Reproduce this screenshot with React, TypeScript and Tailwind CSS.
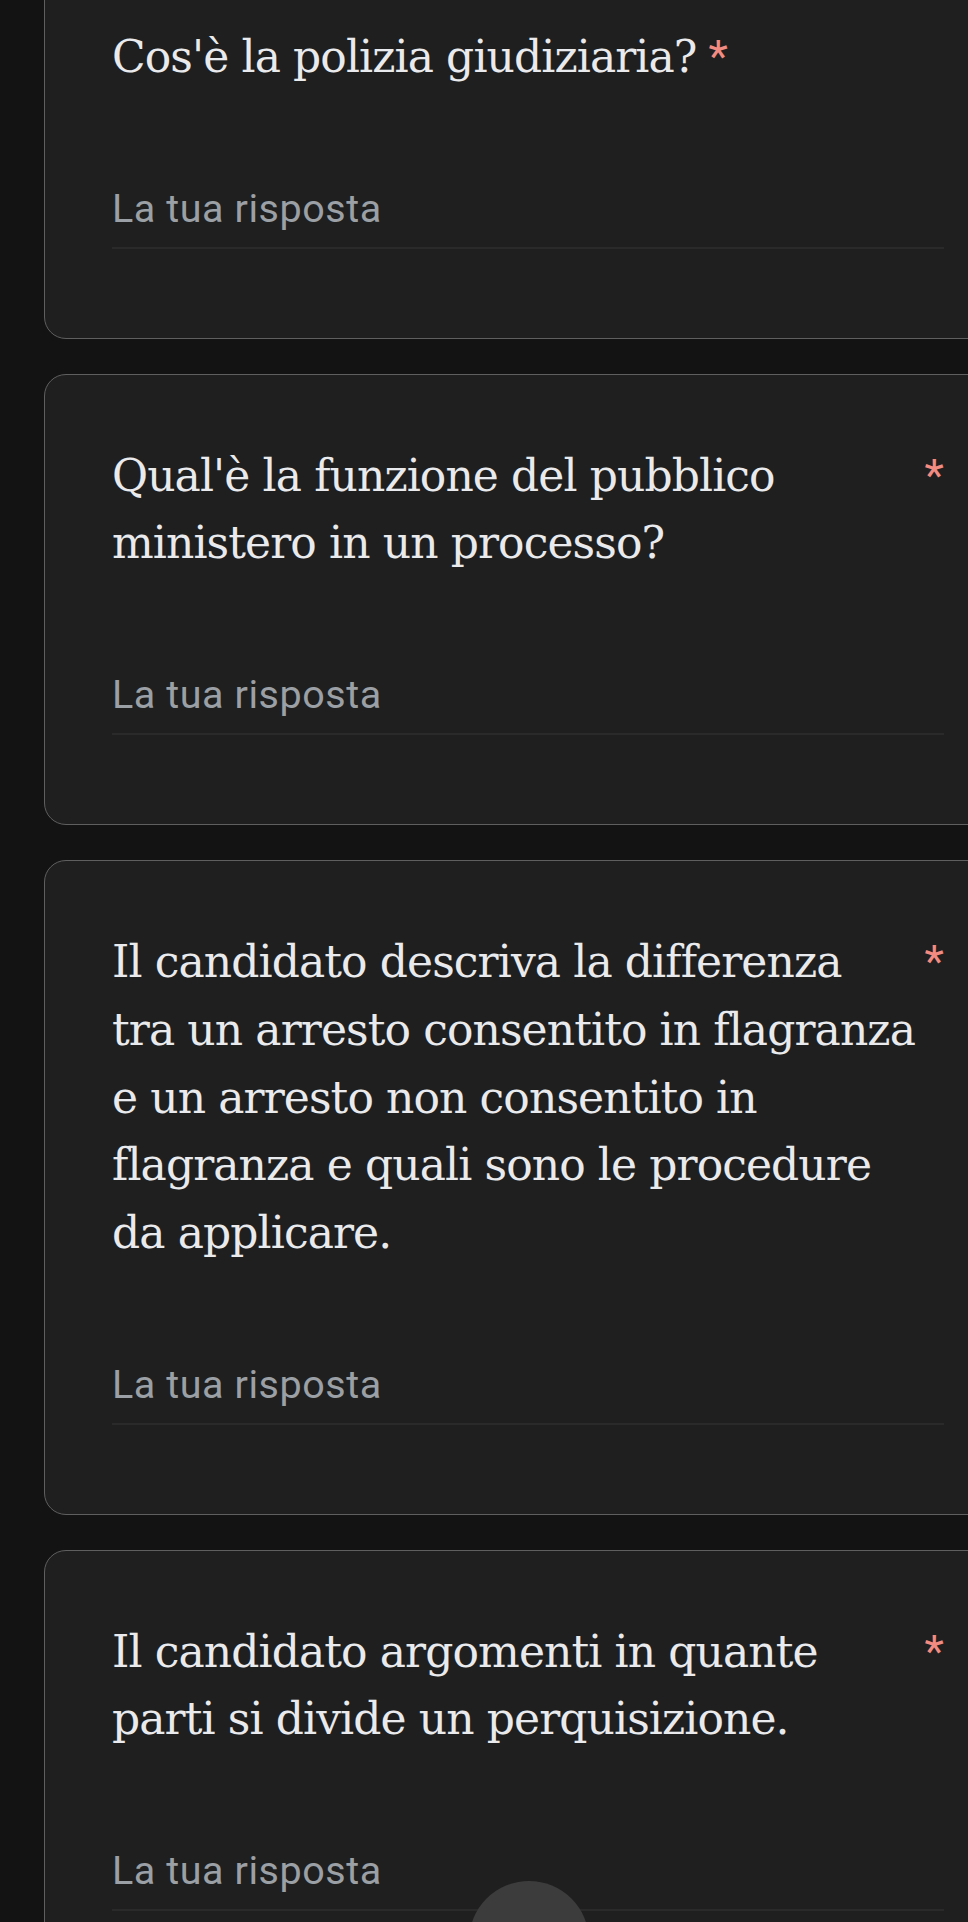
import React from "react";

interface Question {
  lines: string[];
  short?: boolean;
}

const questions: Question[] = [
  { lines: ["Cos'è la polizia giudiziaria?"], short: true },
  { lines: ["Qual'è la funzione del pubblico", "ministero in un processo?"] },
  {
    lines: [
      "Il candidato descriva la differenza",
      "tra un arresto consentito in flagranza",
      "e un arresto non consentito in",
      "flagranza e quali sono le procedure",
      "da applicare.",
    ],
  },
  { lines: ["Il candidato argomenti in quante", "parti si divide un perquisizione."] },
];

function QuestionCard({ q }: { q: Question }) {
  return (
    <div className="w-[968px] shrink-0 rounded-[22px] border border-[#5f5f5f] bg-[#1f1f1f] px-[67px] pt-[67px] pb-[89px]">
      <div className="flex items-start text-[44px] leading-[67.7px] text-[#e8eaed]">
        <span
          className={`whitespace-nowrap font-['DejaVu_Serif',serif] tracking-[-0.9px] ${
            q.short ? "" : "min-w-0 flex-1"
          }`}
        >
          {q.lines.map((line, i) => (
            <React.Fragment key={i}>
              {i > 0 && <br />}
              {line}
            </React.Fragment>
          ))}
        </span>
        <span className="pl-[12px] font-['Roboto',sans-serif] text-[45px] text-[#f28b82]">*</span>
      </div>

      <div className="mt-[90px] border-b-2 border-[#2a2a2a] pb-[10px]">
        <div className="h-[56px] font-['Roboto',sans-serif] text-[39.5px] leading-[56px] tracking-[0.56px] text-[#9aa0a6]">
          La tua risposta
        </div>
      </div>
    </div>
  );
}

export default function App() {
  return (
    <div className="relative min-h-[1922px] w-full overflow-hidden bg-[#131313]">
      <div className="-mt-[45px] flex flex-col gap-[35px] pl-[44px]">
        {questions.map((q, i) => (
          <QuestionCard key={i} q={q} />
        ))}
      </div>

      {/* floating button peeking in at the bottom */}
      <div className="absolute left-[469px] top-[1881px] h-[120px] w-[120px] rounded-full bg-[#3c3c3c]" />
    </div>
  );
}
